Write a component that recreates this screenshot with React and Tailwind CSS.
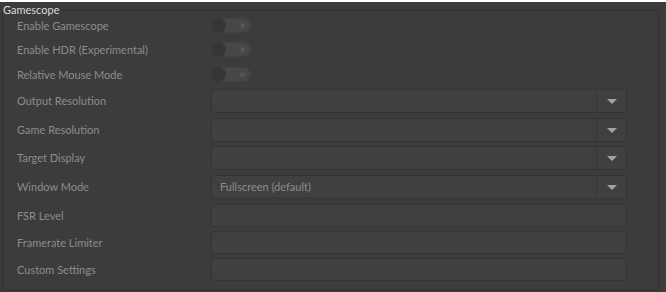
import { useState } from "react";

function Toggle() {
  return (
    <div className="relative w-[40px] h-[15px] rounded-full bg-[#474747] border border-[#424242]">
      <div className="absolute left-[-1px] top-[-1px] w-[15px] h-[15px] rounded-full bg-[#363636]" />
      <svg className="absolute right-[5px] top-[4px]" width="5" height="5" viewBox="0 0 5 5">
        <path d="M0.5 0.5 4.5 4.5M4.5 0.5 0.5 4.5" stroke="#5c5c66" strokeWidth="1.2" />
      </svg>
    </div>
  );
}

function Combo({ value }) {
  return (
    <div className="flex w-[416px] h-[24px] rounded-[3px] border border-[#353535] bg-[#404040]">
      <div className="flex-1 flex items-center pl-[8px] text-[#8c8c8c]">{value}</div>
      <div className="w-[30px] flex items-center justify-center border-l border-[#353535]">
        <svg width="10" height="5" viewBox="0 0 10 5">
          <path d="M0 0h10L5 5z" fill="#a3a3a3" />
        </svg>
      </div>
    </div>
  );
}

function LineEdit() {
  return <div className="w-[416px] h-[23px] rounded-[3px] border border-[#353535] bg-[#404040]" />;
}

function Row({ label, mt, h, children }) {
  return (
    <div className={`flex items-center ${mt} ${h}`}>
      <div className="w-[194px] text-[#8c8c8c]">{label}</div>
      {children}
    </div>
  );
}

export default function App() {
  const [open] = useState(true);
  return (
    <div
      className="w-[666px] h-[292px] bg-[#3c3c3c] pl-[2px] pr-[7px] text-[11px] leading-[16px]"
      style={{ fontFamily: "Lato, sans-serif" }}
    >
      <fieldset className="mt-[2px] border border-[#323232] rounded-[2px] pb-[9px]">
        <legend className="text-[#dcdcdc] pr-[2px] leading-[16px]">Gamescope</legend>
        {open && (
          <div className="flex flex-col pl-[14px]">
            <Row label="Enable Gamescope" mt="mt-[0px]" h="h-[15px]"><Toggle /></Row>
            <Row label="Enable HDR (Experimental)" mt="mt-[9px]" h="h-[15px]"><Toggle /></Row>
            <Row label="Relative Mouse Mode" mt="mt-[10px]" h="h-[15px]"><Toggle /></Row>
            <Row label="Output Resolution" mt="mt-[7px]" h="h-[24px]"><Combo /></Row>
            <Row label="Game Resolution" mt="mt-[5px]" h="h-[24px]"><Combo /></Row>
            <Row label="Target Display" mt="mt-[4px]" h="h-[24px]"><Combo /></Row>
            <Row label="Window Mode" mt="mt-[5px]" h="h-[24px]"><Combo value="Fullscreen (default)" /></Row>
            <Row label="FSR Level" mt="mt-[5px]" h="h-[23px]"><LineEdit /></Row>
            <Row label="Framerate Limiter" mt="mt-[4px]" h="h-[23px]"><LineEdit /></Row>
            <Row label="Custom Settings" mt="mt-[4px]" h="h-[23px]"><LineEdit /></Row>
          </div>
        )}
      </fieldset>
    </div>
  );
}
